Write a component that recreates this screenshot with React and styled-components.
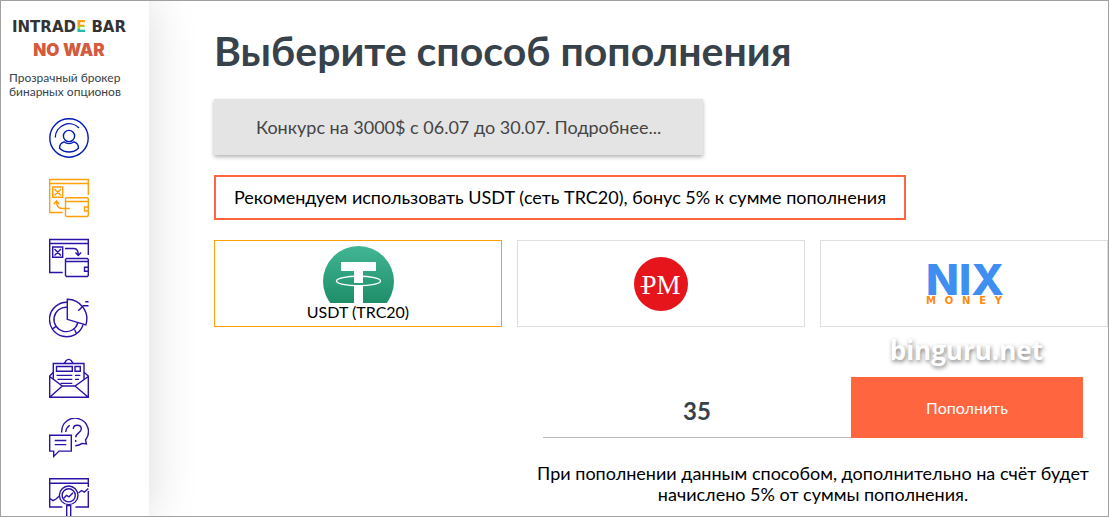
import { useState } from "react";
import styled, { createGlobalStyle } from "styled-components";

const App = () => {
    const [method, setMethod] = useState("usdt");
    const [amount, setAmount] = useState("35");

    return (
        <Page>
            <GlobalStyle />
            <Sidebar>
                <Brand>INTRAD<BrandE>E</BrandE> BAR</Brand>
                <NoWar>NO WAR</NoWar>
                <Slogan>Прозрачный брокер бинарных опционов</Slogan>
                <Nav>
                    <NavLink href="#profile" aria-label="Профиль" $profile><UserIcon /></NavLink>
                    <NavLink href="#deposit" aria-label="Пополнение" $active><DepositIcon /></NavLink>
                    <NavLink href="#withdraw" aria-label="Вывод"><WithdrawIcon /></NavLink>
                    <NavLink href="#stats" aria-label="Статистика"><PieIcon /></NavLink>
                    <NavLink href="#news" aria-label="Новости"><MailIcon /></NavLink>
                    <NavLink href="#support" aria-label="Поддержка"><ChatIcon /></NavLink>
                    <NavLink href="#analytics" aria-label="Аналитика"><ChartIcon /></NavLink>
                </Nav>
            </Sidebar>
            <Main>
                <Title>Выберите способ пополнения</Title>
                <Contest href="#contest">Конкурс на 3000$ с 06.07 до 30.07. Подробнее...</Contest>
                <Notice>Рекомендуем использовать USDT (сеть TRC20), бонус 5% к сумме пополнения</Notice>
                <Methods>
                    <Method type="button" $active={method === "usdt"} onClick={() => setMethod("usdt")}>
                        <TetherLogo />
                        <MethodName>USDT (TRC20)</MethodName>
                    </Method>
                    <Method type="button" aria-label="Perfect Money" $active={method === "pm"} onClick={() => setMethod("pm")}>
                        <PerfectLogo />
                    </Method>
                    <Method type="button" aria-label="Nix Money" $active={method === "nix"} onClick={() => setMethod("nix")}>
                        <NixLogo>
                            <NixName>NIX</NixName>
                            <NixMoney>
                                {[..."MONEY"].map((letter) => <span key={letter}>{letter}</span>)}
                            </NixMoney>
                        </NixLogo>
                    </Method>
                </Methods>
                <Checkout>
                    <SiteMark>binguru.net</SiteMark>
                    <Form onSubmit={(e) => e.preventDefault()}>
                        <Amount
                            type="text"
                            inputMode="numeric"
                            aria-label="Сумма"
                            value={amount}
                            onChange={(e) => setAmount(e.target.value)}
                        />
                        <Submit type="submit">Пополнить</Submit>
                    </Form>
                    <Hint>При пополнении данным способом, дополнительно на счёт будет начислено 5% от суммы пополнения.</Hint>
                </Checkout>
            </Main>
        </Page>
    );
};

const UserIcon = () => (
    <Icon viewBox="0 0 40 40">
        <circle cx="20" cy="20" r="19.2" />
        <path d="M6.3 19.5A13.8 13.8 0 0 1 30 10" />
        <circle cx="20" cy="18" r="5.6" />
        <path d="M15 23.8c-3 1-4.6 3.4-4.4 6.4 5 5 13.8 5 18.8 0 .2-3-1.4-5.4-4.4-6.4-3 2.2-7 2.2-10 0z" />
    </Icon>
);

const DepositIcon = () => (
    <Icon viewBox="0 0 40 40">
        <path d="M39.3 17V1.5H.7v33h13M.7 5.500h38.6" />
        <path d="M3.7 9h10v10.3h-10zM5.5 11l6.5 6.5M12 11l-6.5 6.5" />
        <path d="M20.7 30.5H13q-5.500 0-5.500-7.500M4.800 26.200l2.700-3.400 2.900 3.400" />
        <path d="M17.5 19.7h20.800l1 1v16.800l-1 1H17.5l-1-1V20.700zM16.5 23.5h22.8M39.3 29h-3.800v4h3.800" />
    </Icon>
);

const WithdrawIcon = () => (
    <Icon viewBox="0 0 40 40">
        <path d="M39.3 17V1.5H.7v33h13M.7 5.500h38.6" />
        <path d="M3.7 9h10v10.3h-10zM5.5 11l6.5 6.5M12 11l-6.5 6.5" />
        <path d="M16 10.5h9q4.300 0 4.300 6.800M26.5 14.5l2.800 3 2.800-3" />
        <path d="M17.5 20.5h20.8l1 1v16l-1 1H17.5l-1-1v-16zM16.5 23.5h22.8M39.3 29.3h-3.800v4h3.800" />
    </Icon>
);

const PieIcon = () => (
    <Icon viewBox="0 0 40 40">
        <path d="M18.3 4.3A17.2 17.2 0 1 0 34 27" />
        <path d="M18.3 9.3A12.2 12.2 0 1 0 28.8 25" />
        <path d="M18.3 21.3V1.3A19.6 19.6 0 0 1 36.8 27z" />
        <path d="M3.5 30.8l4-2.700M25.5 31.5l2 4M29.3 12.7l5-5h5.200M36.3 3.700h3.200" />
    </Icon>
);

const MailIcon = () => (
    <Icon viewBox="0 0 40 40">
        <path d="M4.3 21V5.5h30.700V21M15 5.300q1.500-1 2-2.500 2.700-2.800 5.400 0 .5 1.500 2 2.500" />
        <path d="M7.5 8.500h15.800v4.800H7.500zM26 8.500h5.300v4.800H26zM7.500 17.400h15.800M26 17.400h5.300M8.500 21.400h14.800M26 21.400h4M11.500 25.400h11.800" />
        <path d="M4.3 14.3L.7 18v21.300h38.600V18l-4.300-3.700M.7 18.500l12.600 9.500H26l13.300-9.500M.7 39.300L13.300 28M26 28l13.300 11.300" />
    </Icon>
);

const ChatIcon = () => (
    <Icon viewBox="0 0 40 40">
        <path d="M12.7 14.5a13.4 13.4 0 1 1 23.8 7.5l.9 4-4.200-.6q-3 2.300-6.900 2.300" />
        <path d="M16.7 14q.3-4 4-6.800M24.3 11q0-3.700 4-3.700t4 3.700c0 4-5.600 3.700-5.600 8.300M26.7 22v2" />
        <path d="M.7 17.3h21.600v15.800H10l-5.300 5.300v-5.300h-4zM5.7 22.500h11.600M5.7 26.600h11.600" />
    </Icon>
);

const ChartIcon = () => (
    <Icon viewBox="0 0 40 40">
        <path d="M13.3 29H.7V.8h38.600V9M.7 5.300h38.600M39.3 13v16H26.5" />
        <circle cx="19.7" cy="17.3" r="9.3" />
        <circle cx="19.7" cy="17.3" r="6.6" />
        <path d="M.7 20.5l3.300 2.200 3-1.700 3-2.800M29.5 15l3-2.500 2.800 1.700 4-3.700M14.5 20.5l3-3.200 2.500 1.500 4-4" />
        <path d="M17.7 40V27.5h4V40" />
    </Icon>
);

const TetherLogo = () => (
    <svg width="71" height="57" viewBox="0 0 71 57" aria-hidden="true">
        <defs>
            <linearGradient id="tether" x1="0" y1="0" x2="0" y2="1">
                <stop offset="0" stopColor="#42b594" />
                <stop offset="0.85" stopColor="#1c8c66" />
            </linearGradient>
        </defs>
        <circle cx="35.5" cy="35.5" r="35.5" fill="url(#tether)" />
        <ellipse cx="35.5" cy="35" rx="22" ry="4.8" fill="none" stroke="#fff" strokeWidth="1.4" />
        <path d="M18 16h35v9H40v12h-9V25H18zM31 40h9v17h-9z" fill="#fff" />
    </svg>
);

const PerfectLogo = () => (
    <svg width="54" height="54" viewBox="0 0 54 54" aria-hidden="true">
        <circle cx="27" cy="27" r="27" fill="#e6141b" />
        <text x="27" y="37" textAnchor="middle" fill="#fff" fontFamily="Liberation Serif, serif" fontSize="27">PM</text>
        <path d="M6.500 29.500h10" stroke="#fff" />
    </svg>
);

const GlobalStyle = createGlobalStyle`
    * {
        box-sizing: border-box;
    }
    body {
        margin: 0;
        background: #fff;
        color: #000;
        font-family: Lato, "Open Sans", sans-serif;
    }
    button, input {
        font-family: inherit;
    }
`;

const Page = styled.div`
    display: flex;
    height: 100vh;
    overflow: hidden;
    border: 1px solid #a0a0a0;
`;

const Sidebar = styled.aside`
    flex: 0 0 148px;
    padding: 16px 20px 0 8px;
    background: #fff;
    box-shadow: 0 0 50px rgba(0, 0, 0, 0.15);
`;

const Brand = styled.div`
    color: #333;
    font-family: "DejaVu Sans", sans-serif;
    font-size: 15px;
    font-weight: bold;
    line-height: 20px;
    text-align: center;
    white-space: nowrap;
`;

const BrandE = styled.span`
    background: linear-gradient(#fa9f1c 42%, #a5d52a 42%, #a5d52a 62%, #2ab9a8 62%);
    background-clip: text;
    color: transparent;
`;

const NoWar = styled.div`
    margin-top: 2px;
    color: #d35b3f;
    font-family: Inter, sans-serif;
    font-size: 17px;
    font-weight: 900;
    line-height: 22px;
    text-align: center;
`;

const Slogan = styled.p`
    margin: 10px 0 0;
    color: #37424a;
    font-size: 12px;
    line-height: 14px;
`;

const Nav = styled.nav`
    display: flex;
    flex-direction: column;
    align-items: center;
    gap: 20px;
    margin-top: 19px;
`;

const NavLink = styled.a`
    display: block;
    height: 40px;
    color: ${(props) => (props.$active ? "#ff9f0a" : props.$profile ? "#0019b5" : "#2913a8")};
`;

const Icon = styled.svg`
    display: block;
    width: 40px;
    height: 40px;
    fill: none;
    stroke: currentColor;
    stroke-width: 1.4;
`;

const Main = styled.main`
    flex: 1;
    min-width: 0;
    padding: 26px 0 0 65px;
`;

const Title = styled.h1`
    margin: 0;
    color: #37424a;
    font-size: 41px;
    line-height: 48px;
    white-space: nowrap;
`;

const Contest = styled.a`
    display: block;
    width: fit-content;
    margin-top: 24px;
    padding: 16px 42px;
    background: #e4e4e4;
    box-shadow: 0 2px 4px rgba(0, 0, 0, 0.3);
    color: #444;
    font-size: 18px;
    line-height: 24px;
    text-decoration: none;
`;

const Notice = styled.p`
    width: fit-content;
    margin: 20px 0;
    padding: 8px 18px;
    border: 2px solid #ff6640;
    font-size: 18px;
    line-height: 25px;
`;

const Methods = styled.div`
    display: grid;
    grid-template-columns: repeat(3, 1fr);
    gap: 15px;
`;

const Method = styled.button`
    display: flex;
    flex-direction: column;
    align-items: center;
    justify-content: center;
    height: 87px;
    padding: 0;
    border: 1px solid ${(props) => (props.$active ? "#ff9f0a" : "#dedede")};
    background: #fff;
    color: #000;
    cursor: pointer;
`;

const MethodName = styled.span`
    font-size: 16px;
    line-height: 18px;
`;

const NixLogo = styled.span`
    display: block;
    width: 76px;
`;

const NixName = styled.span`
    display: block;
    color: #3f8ff3;
    font-family: Inter, sans-serif;
    font-size: 43px;
    font-weight: 800;
    line-height: 34px;
`;

const NixMoney = styled.span`
    display: flex;
    justify-content: space-between;
    color: #ff8a0c;
    font-family: "DejaVu Sans", sans-serif;
    font-size: 10px;
    font-weight: bold;
    line-height: 10px;
`;

const Checkout = styled.section`
    max-width: 590px;
    margin-left: auto;
    padding: 0 25px;
`;

const SiteMark = styled.div`
    padding-right: 40px;
    color: #fff;
    font-family: "Open Sans", sans-serif;
    font-size: 26px;
    font-weight: 700;
    line-height: 46px;
    text-align: right;
    text-shadow: 1px 2px 4px rgba(0, 0, 0, 0.5);
`;

const Form = styled.form`
    display: flex;
    height: 61px;
    margin-top: 4px;
`;

const Amount = styled.input`
    flex: 1;
    min-width: 0;
    padding: 6px 0 0;
    border: 0;
    border-bottom: 1px solid #bbb;
    outline: none;
    color: #37424a;
    font-size: 24px;
    font-weight: 700;
    text-align: center;
`;

const Submit = styled.button`
    flex: 0 0 232px;
    border: 0;
    background: #ff6640;
    color: #fff;
    font-size: 16px;
    cursor: pointer;
`;

const Hint = styled.p`
    margin: 25px -12px 0;
    font-size: 18px;
    line-height: 21px;
    text-align: center;
`;

export default App;
